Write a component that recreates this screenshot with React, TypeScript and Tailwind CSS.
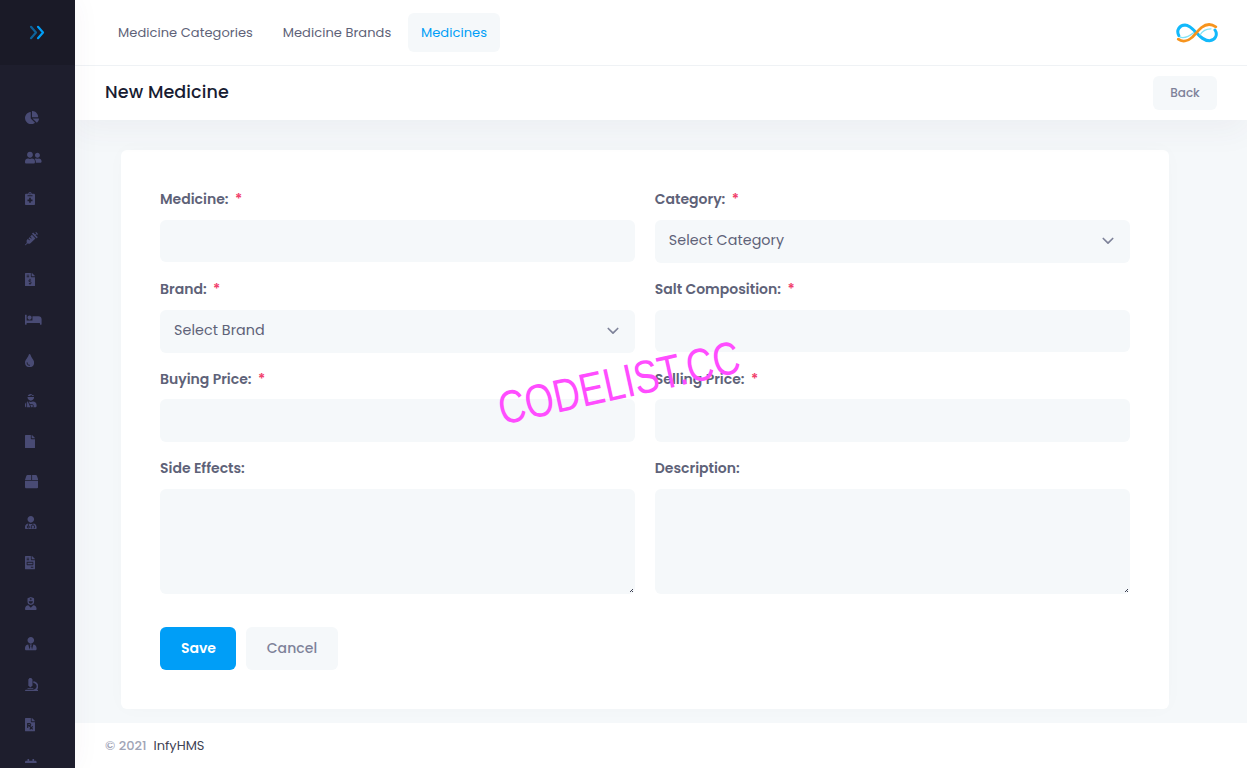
import React from "react";
import {
  FaChartPie, FaUserFriends, FaNotesMedical, FaSyringe, FaFileInvoiceDollar, FaBed, FaTint,
  FaUserInjured, FaFile, FaBox, FaUserMd, FaFileInvoice, FaUserNurse, FaUserTie, FaMicroscope,
  FaFilePrescription, FaCalendar,
} from "react-icons/fa";

const menu = [
  { Icon: FaChartPie, width: "w-[14px]" },
  { Icon: FaUserFriends, width: "w-[16.6px]" },
  { Icon: FaNotesMedical, width: "w-[10px]" },
  { Icon: FaSyringe, width: "w-[13.3px]" },
  { Icon: FaFileInvoiceDollar, width: "w-[10px]" },
  { Icon: FaBed, width: "w-[16.6px]" },
  { Icon: FaTint, width: "w-[9.2px]" },
  { Icon: FaUserInjured, width: "w-[11.6px]" },
  { Icon: FaFile, width: "w-[10px]" },
  { Icon: FaBox, width: "w-[13.3px]" },
  { Icon: FaUserMd, width: "w-[11.6px]" },
  { Icon: FaFileInvoice, width: "w-[10px]" },
  { Icon: FaUserNurse, width: "w-[11.6px]" },
  { Icon: FaUserTie, width: "w-[11.6px]" },
  { Icon: FaMicroscope, width: "w-[13.3px]" },
  { Icon: FaFilePrescription, width: "w-[10px]" },
  { Icon: FaCalendar, width: "w-[11.6px]" },
];

function Sidebar() {
  return (
    <aside className="relative z-20 flex h-full w-[75px] shrink-0 flex-col bg-[#1e1e2d] shadow-[0_0_28px_0_rgba(82,63,105,0.05)]">
      <div className="flex h-[65px] shrink-0 items-center bg-[#1a1a27] pl-[28.5px]">
        <svg width="16" height="15" viewBox="0 0 16 15" fill="none" strokeWidth="2.2" strokeLinecap="round" strokeLinejoin="round">
          <path d="M2 1.800 7 7.500 2 13.200" stroke="#0f6299" />
          <path d="M9 1.800 14 7.500 9 13.200" stroke="#009ef7" />
        </svg>
      </div>
      <nav className="mb-[5px] flex min-h-0 flex-1 flex-col overflow-hidden pt-[32.4px]">
        {menu.map(({ Icon, width }, i) => (
          <a key={i} className="flex h-[40.5px] shrink-0 items-center pl-[25px] text-[#494b74]">
            <Icon className={"h-[13.3px] " + width} />
          </a>
        ))}
      </nav>
    </aside>
  );
}

function Logo() {
  return (
    <svg width="42" height="22" viewBox="0 0 42 22" fill="none" strokeLinecap="round">
      <path d="M3 14.500C8 17.500 13 14.500 18 10.500" stroke="#7fe3f7" strokeWidth="1.400" />
      <path d="M2.800 13.500C0 8.500 3.500 3 9 3C18 3.500 23 18.800 33.500 18.800C39.500 18.300 42 12.500 39 8" stroke="#12b9fb" strokeWidth="3" />
      <path d="M24 13C27 8 30 6.800 35 6.800" stroke="#7fe3f7" strokeWidth="1.200" />
      <path d="M2.300 17.200C6 20.200 11.500 19.500 16.500 15C20 11.500 22 8.500 25.500 5.500C30 2 35 1.500 39.800 4.800" stroke="#f7941d" strokeWidth="2.800" />
    </svg>
  );
}

function Label({ text, required = true }: { text: string; required?: boolean }) {
  return (
    <label className="flex h-5 items-center text-[14px] font-semibold text-[#5e6278]">
      <span>{text}</span>
      {required && <span className="ml-[6.5px] text-[#f1416c]">*</span>}
    </label>
  );
}

function Select({ text }: { text: string }) {
  return (
    <div className="mt-[11px] flex h-[43px] items-center justify-between rounded-md bg-[#f5f8fa] pl-[14px] pr-4 text-[14.3px] tracking-[0.07px] text-[#5e6278]">
      <span className="-mt-0.5">{text}</span>
      <svg className="-mt-0.5" width="12" height="8" viewBox="0 0 12 8" fill="none" stroke="#7e8299" strokeWidth="1.700" strokeLinecap="round" strokeLinejoin="round">
        <path d="M1.300 1.500 6 6.200 10.700 1.500" />
      </svg>
    </div>
  );
}

function Area() {
  return (
    <div className="relative mt-[11px]">
      <textarea className="block h-[105px] w-full resize-none rounded-md bg-[#f5f8fa] outline-none" />
      <svg className="absolute right-[2px] bottom-[2px]" width="3" height="3" viewBox="0 0 3 3" fill="#3f4254" shapeRendering="crispEdges">
        <path d="M2 0h1v1H2zM1 1h1v1H1zM0 2h1v1H0zM2 2h1v1H2z" />
      </svg>
    </div>
  );
}

const inputClass = "mt-[11px] block h-[42px] w-full rounded-md bg-[#f5f8fa] outline-none";
const priceClass = "mt-[10px] block h-[43px] w-full rounded-md bg-[#f5f8fa] outline-none";

export default function App() {
  return (
    <div className="flex h-[768px] w-full overflow-hidden bg-[#f5f8fa] font-['Poppins','Inter',sans-serif]">
      <Sidebar />
      <div className="flex min-w-0 flex-1 flex-col">
        <header className="relative z-10 shrink-0 bg-white shadow-[0_10px_30px_0_rgba(82,63,105,0.05)]">
          <div className="flex h-[66px] items-center justify-between border-b border-[#eff2f5] pl-[30px] pr-[29px]">
            <nav className="flex items-center gap-1 text-[13px] tracking-[0.06px] text-[#5e6278]">
              <a className="flex h-[39px] w-[161px] items-center justify-center rounded-md">Medicine Categories</a>
              <a className="flex h-[39px] w-[134px] items-center justify-center rounded-md">Medicine Brands</a>
              <a className="flex h-[39px] w-[92px] items-center justify-center rounded-md bg-[#f5f8fa] text-[#009ef7]">Medicines</a>
            </nav>
            <Logo />
          </div>
          <div className="flex h-[54px] items-center justify-between px-[30px]">
            <h1 className="-mt-0.5 text-[17.55px] font-medium tracking-[0.1px] text-[#181c32]">New Medicine</h1>
            <button className="h-[34px] w-16 rounded-md bg-[#f5f8fa] text-[12px] font-medium text-[#7e8299]">Back</button>
          </div>
        </header>

        <main className="mx-[46px] mt-[30px] h-[559px] w-[1048px] shrink-0 rounded-md bg-white px-[39px] pt-[39px] shadow-[0_0_20px_0_rgba(76,87,125,0.02)]">
          <div className="grid grid-cols-2 grid-rows-[90px_90px_89px_138px] gap-x-[19.5px]">
            <div><Label text="Medicine:" /><input className={inputClass} /></div>
            <div><Label text="Category:" /><Select text="Select Category" /></div>
            <div><Label text="Brand:" /><Select text="Select Brand" /></div>
            <div><Label text="Salt Composition:" /><input className={inputClass} /></div>
            <div><Label text="Buying Price:" /><input className={priceClass} /></div>
            <div><Label text="Selling Price:" /><input className={priceClass} /></div>
            <div><Label text="Side Effects:" required={false} /><Area /></div>
            <div><Label text="Description:" required={false} /><Area /></div>
          </div>
          <div className="mt-[31px] flex gap-[10px] text-[14px]">
            <button className="h-[43px] w-[76px] rounded-md bg-[#009ef7] pl-px font-semibold text-white">Save</button>
            <button className="h-[43px] w-[92px] rounded-md bg-[#f5f8fa] font-medium tracking-[0.1px] text-[#7e8299]">Cancel</button>
          </div>
        </main>

        <footer className="mt-[14px] flex h-[45px] shrink-0 items-center gap-[7px] bg-white pl-[30px] text-[13px]">
          <span className="font-medium text-[#a1a5b7]">© 2021</span>
          <span className="text-[#3f4254]">InfyHMS</span>
        </footer>
      </div>
      <div className="pointer-events-none absolute left-[619px] top-[383px] z-30">
        <div className="-translate-x-1/2 -translate-y-1/2 -rotate-[12.5deg]">
          <div className="scale-x-[0.8] whitespace-nowrap font-['Liberation_Sans',sans-serif] text-[46.5px] leading-none text-[#ff4dff]">CODELIST.CC</div>
        </div>
      </div>
    </div>
  );
}
